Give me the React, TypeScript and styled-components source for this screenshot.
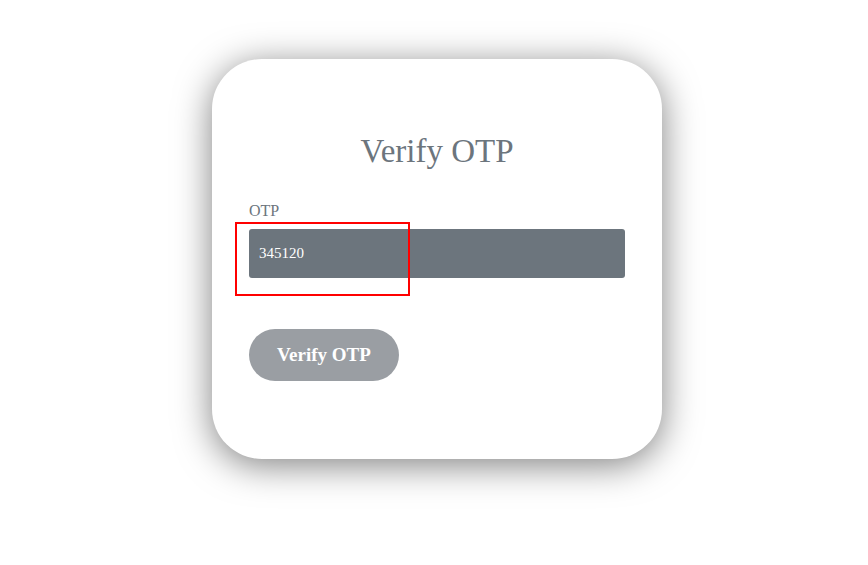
import styled, { createGlobalStyle } from "styled-components";

const Global = createGlobalStyle`
  html, body {
    margin: 0;
    padding: 0;
    background: #fff;
    font-family: "Liberation Serif", "Times New Roman", serif;
  }
`;

const Page = styled.div`
  display: flex;
  justify-content: center;
  padding: 59px 0 0 6px;
  height: 565px;
  box-sizing: border-box;
`;

const Card = styled.div`
  position: relative;
  width: 450px;
  height: 400px;
  box-sizing: border-box;
  padding: 73px 37px 0;
  background: #fff;
  border-radius: 50px;
  box-shadow: 0 6px 36px rgba(0, 0, 0, 0.5);
  display: flex;
  flex-direction: column;
`;

const Title = styled.h2`
  margin: 0 0 32px;
  font-size: 33px;
  line-height: 38px;
  font-weight: normal;
  text-align: center;
  color: #6c757d;
`;

const Label = styled.label`
  display: block;
  font-size: 16px;
  line-height: 18px;
  color: #6c757d;
  margin-bottom: 9px;
`;

const Input = styled.input`
  width: 100%;
  height: 49px;
  box-sizing: border-box;
  border: none;
  border-radius: 3px;
  background: #6c757d;
  color: #fff;
  padding: 0 10px;
  font-family: "Liberation Serif", "Times New Roman", serif;
  font-size: 15px;
  outline: none;
`;

const Button = styled.button`
  margin-top: 51px;
  width: 150px;
  height: 52px;
  border: none;
  border-radius: 26px;
  background: #9a9ea3;
  color: #fff;
  font-family: "Liberation Serif", "Times New Roman", serif;
  font-size: 19px;
  font-weight: bold;
  cursor: pointer;
`;

const Highlight = styled.div`
  position: absolute;
  left: 23px;
  top: 163px;
  width: 175px;
  height: 74px;
  box-sizing: border-box;
  border: 2px solid #ff0000;
  pointer-events: none;
`;

export default function App() {
  return (
    <>
      <Global />
      <Page>
        <Card>
          <Title>Verify OTP</Title>
          <Label htmlFor="otp">OTP</Label>
          <Input id="otp" defaultValue="345120" readOnly />
          <Button>Verify OTP</Button>
          <Highlight />
        </Card>
      </Page>
    </>
  );
}
